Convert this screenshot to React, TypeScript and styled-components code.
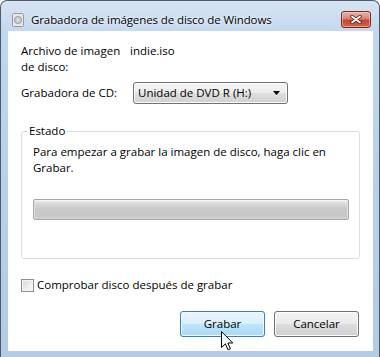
import React from 'react'
import styled, { createGlobalStyle } from 'styled-components'

const GlobalStyle = createGlobalStyle`
  html, body {
    margin: 0;
    padding: 0;
    background: #ffffff;
  }
  body {
    font-family: 'Open Sans', 'Liberation Sans', sans-serif;
    font-size: 11.5px;
    color: #000000;
  }
`

const Window = styled.div`
  position: relative;
  width: 380px;
  height: 357px;
  box-sizing: border-box;
  display: flex;
  flex-direction: column;
  border: 1px solid #4f5b6a;
  border-bottom: none;
  border-radius: 7px 7px 0 0;
  background: linear-gradient(180deg, #d6e4f4 0%, #c3d7ee 9%, #b9cfea 50%, #b4cbe8 100%);
  overflow: hidden;
`

const TitleBar = styled.div`
  height: 30px;
  display: flex;
  align-items: flex-start;
  padding: 0 8px 0 11px;
  box-sizing: border-box;
`

const TitleIcon = styled.svg`
  margin-top: 12px;
  flex-shrink: 0;
`

const TitleText = styled.div`
  margin: 10px 0 0 7px;
  font-size: 11.5px;
  letter-spacing: -0.1px;
  line-height: 17px;
  color: #000;
  text-shadow: 0 0 6px rgba(255, 255, 255, 0.9), 0 0 2px rgba(255, 255, 255, 0.8);
`

const CloseButton = styled.div`
  margin: 10px 0 0 auto;
  width: 30px;
  height: 17px;
  box-sizing: border-box;
  border: 1px solid #7a2a1f;
  border-radius: 3px;
  background: linear-gradient(180deg, #eab4a8 0%, #d98372 45%, #c5452f 55%, #d0654c 100%);
  box-shadow: inset 0 0 0 1px rgba(255, 220, 210, 0.5);
  display: flex;
  align-items: center;
  justify-content: center;
`

const Client = styled.div`
  flex: 1;
  margin: 0 6px 6px 7px;
  background: #ffffff;
  display: flex;
  flex-direction: column;
  padding: 12px 13px 12px 13px;
  box-sizing: border-box;
  line-height: 16px;
`

const InfoGrid = styled.div`
  display: grid;
  grid-template-columns: 109px 1fr;
  row-gap: 7px;
  align-items: center;
`

const Label = styled.div<{ $top?: boolean }>`
  align-self: ${({ $top }) => ($top ? 'start' : 'center')};
`

const Value = styled.div`
  align-self: start;
`

const Combo = styled.div`
  margin-left: 3px;
  width: 155px;
  height: 22px;
  box-sizing: border-box;
  border: 1px solid #707070;
  border-radius: 3px;
  background: linear-gradient(180deg, #f4f4f4 0%, #ececec 48%, #dedede 52%, #d1d1d1 100%);
  box-shadow: inset 0 0 0 1px #fbfbfb;
  display: flex;
  align-items: center;
  justify-content: space-between;
  padding: 0 7px 0 4px;
`

const GroupBox = styled.fieldset`
  margin: 19px 0 0;
  padding: 5px 10px 38px 11px;
  border: 1px solid #d5dfe5;
  border-radius: 3px;
  min-width: 0;
`

const GroupTitle = styled.legend`
  margin-left: -6px;
  padding: 0 2px;
  line-height: 16px;
`

const StatusText = styled.div`
  line-height: 16px;
`

const Progress = styled.div`
  margin-top: 23px;
  height: 21px;
  box-sizing: border-box;
  border: 1px solid #a7a7a7;
  border-radius: 2px;
  background: linear-gradient(180deg, #ececec 0%, #d6d6d6 25%, #c8c8c8 50%, #c8c8c8 85%, #d4d4d4 100%);
  box-shadow: inset 1px 0 0 #e2e2e2, inset -1px 0 0 #e2e2e2, inset 0 1px 0 #f6f6f6;
`

const CheckRow = styled.label`
  margin-top: 18px;
  display: flex;
  align-items: center;
  gap: 3px;
`

const CheckBox = styled.span`
  width: 13px;
  height: 13px;
  box-sizing: border-box;
  border: 1px solid #8e8f8f;
  background: linear-gradient(135deg, #d8d8d8 0%, #f0f0f0 60%, #fafafa 100%);
  box-shadow: inset 0 0 0 1px #f4f4f4;
`

const ButtonRow = styled.div`
  margin-top: 18px;
  margin-right: 1px;
  display: flex;
  justify-content: flex-end;
  gap: 9px;
`

const Button = styled.div<{ $hot?: boolean }>`
  width: 85px;
  height: 26px;
  box-sizing: border-box;
  border: 1px solid ${({ $hot }) => ($hot ? '#3c7fb1' : '#707070')};
  border-radius: 3px;
  background: ${({ $hot }) =>
    $hot
      ? 'linear-gradient(180deg, #eaf6fd 0%, #d9f0fc 48%, #bee6fd 52%, #a7d9f5 100%)'
      : 'linear-gradient(180deg, #f2f2f2 0%, #ebebeb 48%, #dddddd 52%, #cfcfcf 100%)'};
  box-shadow: inset 0 0 0 1px ${({ $hot }) => ($hot ? '#f4fbff' : '#fcfcfc')};
  display: flex;
  align-items: center;
  justify-content: center;
`

const Cursor = styled.svg`
  position: absolute;
  left: 220px;
  top: 330px;
`

export default function App() {
  return (
    <>
      <GlobalStyle />
      <Window>
        <TitleBar>
          <TitleIcon width="12" height="14" viewBox="0 0 12 14">
            <rect x="0.5" y="0.5" width="11" height="13" rx="1" fill="#e6e6e6" stroke="#9a9a9a" />
            <circle cx="6" cy="7" r="3.6" fill="#c9ccd0" stroke="#8d8f93" strokeWidth="0.8" />
            <circle cx="6" cy="7" r="1" fill="#f4f4f4" />
          </TitleIcon>
          <TitleText>Grabadora de imágenes de disco de Windows</TitleText>
          <CloseButton>
            <svg width="12" height="9" viewBox="0 0 12 9">
              <path d="M2 1.5 L10 7.5 M10 1.5 L2 7.5" stroke="#4a1a12" strokeWidth="3.4" strokeLinecap="round" />
              <path d="M2 1.5 L10 7.5 M10 1.5 L2 7.5" stroke="#ffffff" strokeWidth="1.8" strokeLinecap="round" />
            </svg>
          </CloseButton>
        </TitleBar>
        <Client>
          <InfoGrid>
            <Label $top>
              Archivo de imagen
              <br />
              de disco:
            </Label>
            <Value>indie.iso</Value>
            <Label>Grabadora de CD:</Label>
            <Combo>
              <span>Unidad de DVD R (H:)</span>
              <svg width="7" height="4" viewBox="0 0 7 4">
                <path d="M0 0 H7 L3.5 4 Z" fill="#000" />
              </svg>
            </Combo>
          </InfoGrid>
          <GroupBox>
            <GroupTitle>Estado</GroupTitle>
            <StatusText>Para empezar a grabar la imagen de disco, haga clic en Grabar.</StatusText>
            <Progress />
          </GroupBox>
          <CheckRow>
            <CheckBox />
            Comprobar disco después de grabar
          </CheckRow>
          <ButtonRow>
            <Button $hot>Grabar</Button>
            <Button>Cancelar</Button>
          </ButtonRow>
        </Client>
        <Cursor width="13" height="20" viewBox="0 0 13 20">
          <path
            d="M0.5 0.5 L0.5 16.5 L4.4 12.8 L7 18.8 L9.4 17.8 L6.9 12 L11.8 12 Z"
            fill="#ffffff"
            stroke="#000000"
            strokeWidth="1"
            strokeLinejoin="miter"
          />
        </Cursor>
      </Window>
    </>
  )
}
